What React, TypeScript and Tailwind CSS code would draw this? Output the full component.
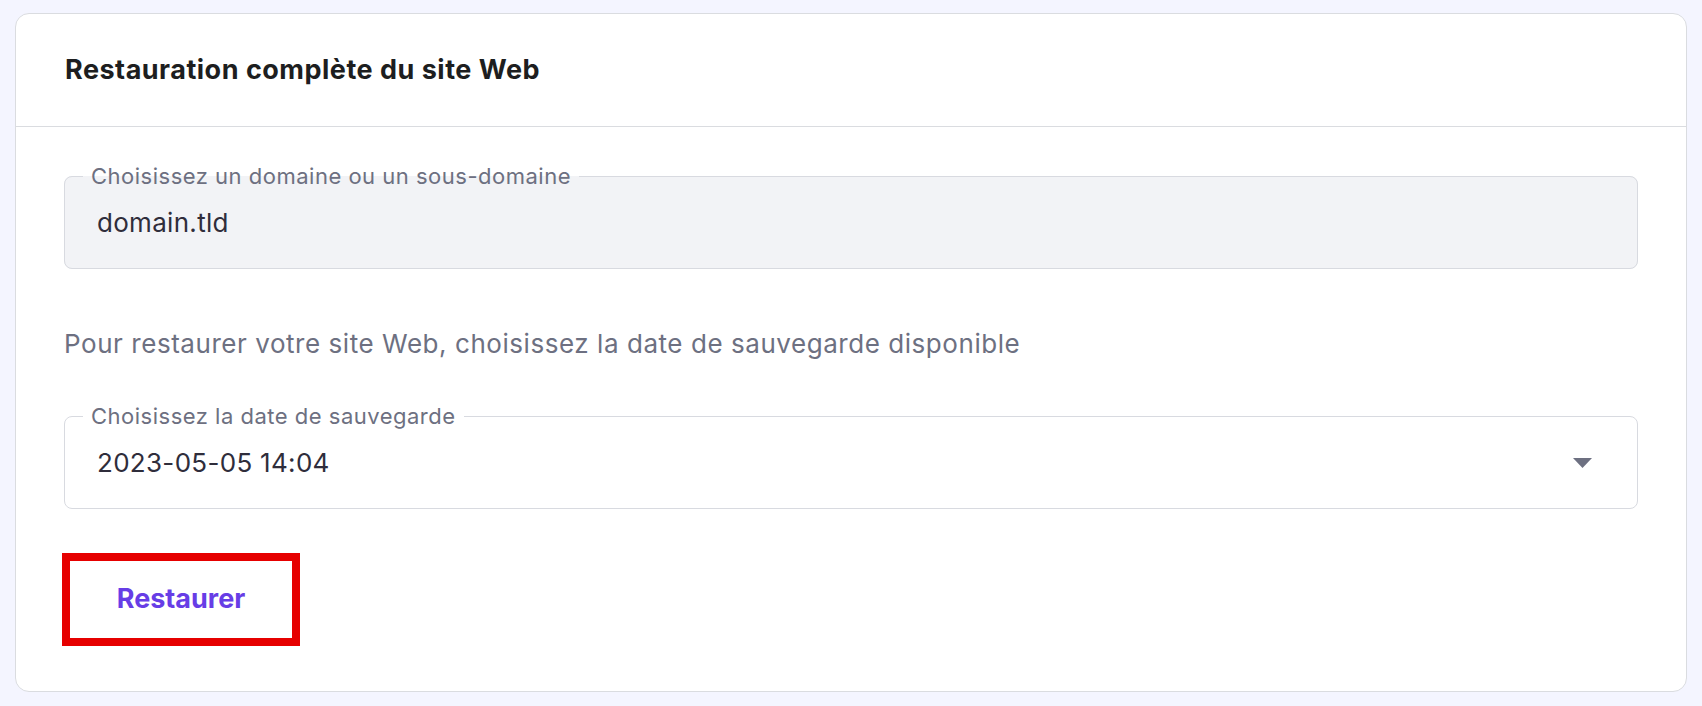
const font = { fontFamily: "Inter, 'Noto Sans', sans-serif" };

function Field({
  label,
  value,
  disabled,
  select,
}: {
  label: string;
  value: string;
  disabled?: boolean;
  select?: boolean;
}) {
  return (
    <fieldset
      className={`m-0 min-w-0 rounded-[8px] border border-[#d8dae0] p-0 ${
        disabled ? "bg-[#f2f3f6]" : "bg-white"
      }`}
    >
      <legend className="ml-[18px] px-[8px] text-[22px] leading-[26px] tracking-[0.5px] text-[#6d7081]">
        {label}
      </legend>
      <div className="flex h-[79px] items-start justify-between pl-[32px] pr-[45px] pt-[19px]">
        <span className="text-[26px] leading-[30px] tracking-[0.3px] text-[#2f2d3b]">{value}</span>
        {select && (
          <svg width="19" height="10" viewBox="0 0 19 10" className="mt-[10px]">
            <path d="M0 0h19L9.5 10z" fill="#6d7081" />
          </svg>
        )}
      </div>
    </fieldset>
  );
}

export default function App() {
  return (
    <div className="min-h-screen bg-[#f4f5ff] px-[15px] pb-[13px] pt-[13px]" style={font}>
      <div className="rounded-[14px] border border-[#dadce0] bg-white">
        <div className="flex h-[113px] items-center border-b border-[#dadce0] px-[49px]">
          <h2 className="text-[27px] font-bold tracking-[0.5px] text-[#1d1e20]">
            Restauration complète du site Web
          </h2>
        </div>

        <div className="px-[48px] pb-[45px] pt-[36px]">
          <Field label="Choisissez un domaine ou un sous-domaine" value="domain.tld" disabled />

          <p className="mt-[58px] text-[26px] leading-[34px] tracking-[0.55px] text-[#6d7081]">
            Pour restaurer votre site Web, choisissez la date de sauvegarde disponible
          </p>

          <div className="mt-[42px]">
            <Field label="Choisissez la date de sauvegarde" value="2023-05-05 14:04" select />
          </div>

          <button className="-ml-[2px] mt-[44px] flex h-[93px] w-[238px] items-center justify-center border-[8px] border-[#e60000] bg-white text-[27px] font-bold text-[#673de6]">
            Restaurer
          </button>
        </div>
      </div>
    </div>
  );
}
